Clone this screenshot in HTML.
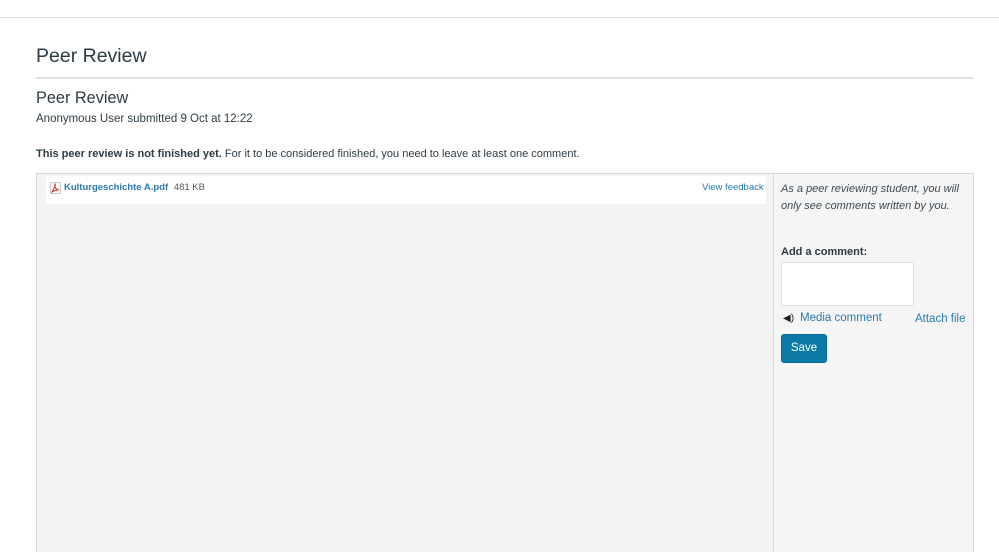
<!DOCTYPE html>
<html><head><meta charset="utf-8"><style>
html,body{margin:0;width:999px;height:552px;overflow:hidden;background:#fff;font-family:"Liberation Sans",sans-serif;color:#2d3b45;position:relative}
.a{position:absolute;white-space:nowrap}
a,.lk{color:#2a7ab0;text-decoration:none}
</style></head><body>
<div class="a" style="left:0;top:17px;width:999px;height:1px;background:#dcdfe2"></div>
<div class="a" style="left:36px;top:45px;font-size:19.5px;color:#2d3b45">Peer Review</div>
<div class="a" style="left:36px;top:77px;width:937px;height:2px;background:#dfe2e4"></div>
<div class="a" style="left:36px;top:89px;font-size:16.3px">Peer Review</div>
<div class="a" style="left:36px;top:113px;font-size:11.5px">Anonymous User submitted 9 Oct at 12:22</div>
<div class="a" style="left:36px;top:148px;font-size:11px"><b>This peer review is not finished yet.</b> For it to be considered finished, you need to leave at least one comment.</div>
<div class="a" style="left:36px;top:173px;width:936px;height:400px;border:1px solid #d8d8d8;background:#f3f3f3"></div>
<div class="a" style="left:773px;top:174px;width:1px;height:400px;background:#d8d8d8"></div>
<div class="a" style="left:774px;top:174px;width:198px;height:400px;background:#f5f5f5"></div>
<div class="a" style="left:46px;top:176px;width:720px;height:28px;background:#fff"></div>
<svg class="a" style="left:50px;top:182px" width="11" height="12" viewBox="0 0 11 12"><rect x="0.5" y="0.5" width="10" height="11" fill="#fff" stroke="#ccc"/><path d="M2 10 C4 6 6 4 5 2 C4 4 6 8 9 8 C7 7 4 9 2 10Z" fill="none" stroke="#d9261c" stroke-width="1"/></svg>
<div class="a lk" style="left:64px;top:182px;font-size:9.5px;font-weight:bold">Kulturgeschichte A.pdf <span style="color:#555;font-weight:normal;margin-left:3px">481 KB</span></div>
<div class="a lk" style="left:702px;top:182px;font-size:9.5px">View feedback</div>
<div class="a" style="left:781px;top:181px;font-size:11px;font-style:italic;line-height:17px;color:#3d4a53">As a peer reviewing student, you will<br>only see comments written by you.</div>
<div class="a" style="left:781px;top:246px;font-size:11px;font-weight:bold">Add a comment:</div>
<div class="a" style="left:781px;top:262px;width:131px;height:42px;background:#fff;border:1px solid #e0e0e0;border-radius:2px"></div>
<div class="a" style="left:783px;top:313px;font-size:10px;color:#222">◀)</div>
<div class="a lk" style="left:800px;top:312px;font-size:11.5px">Media comment</div>
<div class="a lk" style="left:915px;top:313px;font-size:11.5px">Attach file</div>
<div class="a" style="left:781px;top:334px;width:44px;height:27px;background:#0b7aa6;border:1px solid #0a6a90;border-radius:3px;color:#fff;font-size:11.5px;text-align:center;line-height:27px">Save</div>
</body></html>
